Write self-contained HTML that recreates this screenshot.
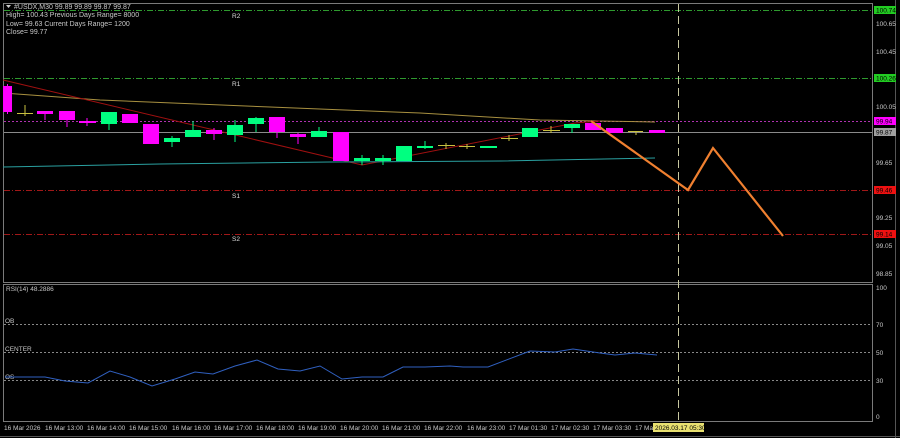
<!DOCTYPE html><html><head><style>
html,body{margin:0;padding:0;background:#000;width:900px;height:438px;overflow:hidden}
svg{display:block}
text{font-family:"Liberation Sans",sans-serif;font-size:6.5px;fill:#c8c8c8}
text.k{fill:#000}
text.w{fill:#ddd}
text.h{font-size:7px}
</style></head><body>
<svg width="900" height="438" viewBox="0 0 900 438">
<rect width="900" height="438" fill="#000"/>
<rect x="3.5" y="3.5" width="869" height="279" fill="none" stroke="#7a7a7a"/>
<rect x="3.5" y="284.5" width="869" height="137" fill="none" stroke="#7a7a7a"/>
<line x1="0" y1="436.5" x2="900" y2="436.5" stroke="#555"/>
<line x1="895.5" y1="0" x2="895.5" y2="438" stroke="#555"/>
<g stroke-width="1" fill="none">
<line x1="4" y1="10.5" x2="872" y2="10.5" stroke="#2e9a2e" stroke-dasharray="6,2,1,2"/>
<line x1="4" y1="78.5" x2="872" y2="78.5" stroke="#2e9a2e" stroke-dasharray="6,2,1,2"/>
<line x1="4" y1="121.5" x2="872" y2="121.5" stroke="#b030b0" stroke-dasharray="2,2"/>
<line x1="4" y1="132.5" x2="872" y2="132.5" stroke="#8a8a8a"/>
<line x1="4" y1="190.5" x2="872" y2="190.5" stroke="#a01818" stroke-dasharray="6,2,1,2"/>
<line x1="4" y1="234.5" x2="872" y2="234.5" stroke="#a01818" stroke-dasharray="6,2,1,2"/>
<line x1="678.5" y1="4" x2="678.5" y2="422" stroke="#c8c8a0" stroke-dasharray="8,4"/>
</g>
<text x="232" y="18" class="w">R2</text>
<text x="232" y="86" class="w">R1</text>
<text x="232" y="198" class="w">S1</text>
<text x="232" y="241" class="w">S2</text>
<polyline points="3,93 100,100 270,107 420,113 540,120 655,122" fill="none" stroke="#a89040" stroke-width="1"/>
<polyline points="3,80 362,165 575,123 600,121" fill="none" stroke="#a01010" stroke-width="1"/>
<polyline points="3,167 160,164 330,162 500,161 655,158" fill="none" stroke="#2aa0a0" stroke-width="1"/>
<g>
<line x1="7.5" y1="84" x2="7.5" y2="114" stroke="#ff00ff"/><rect x="3" y="86" width="9" height="26" fill="#ff00ff"/>
<line x1="25" y1="105" x2="25" y2="116" stroke="#c8c040"/><rect x="17" y="113" width="16" height="1" fill="#c8c040"/>
<line x1="45" y1="111" x2="45" y2="120" stroke="#ff00ff"/><rect x="37" y="111" width="16" height="3" fill="#ff00ff"/>
<line x1="67" y1="111" x2="67" y2="127" stroke="#ff00ff"/><rect x="59" y="111" width="16" height="9" fill="#ff00ff"/>
<line x1="87" y1="118" x2="87" y2="126" stroke="#ff00ff"/><rect x="79" y="121" width="17" height="2" fill="#ff00ff"/>
<line x1="109" y1="112" x2="109" y2="130" stroke="#00ff80"/><rect x="101" y="112" width="16" height="12" fill="#00ff80"/>
<rect x="122" y="114" width="16" height="9" fill="#ff00ff"/>
<line x1="151" y1="124" x2="151" y2="144" stroke="#ff00ff"/><rect x="143" y="124" width="16" height="20" fill="#ff00ff"/>
<line x1="172" y1="136" x2="172" y2="147" stroke="#00ff80"/><rect x="164" y="138" width="16" height="4" fill="#00ff80"/>
<line x1="193" y1="121" x2="193" y2="137" stroke="#00ff80"/><rect x="185" y="130" width="16" height="7" fill="#00ff80"/>
<line x1="214" y1="128" x2="214" y2="140" stroke="#ff00ff"/><rect x="206" y="130" width="16" height="4" fill="#ff00ff"/>
<line x1="235" y1="120" x2="235" y2="142" stroke="#00ff80"/><rect x="227" y="125" width="16" height="10" fill="#00ff80"/>
<line x1="256" y1="117" x2="256" y2="132" stroke="#00ff80"/><rect x="248" y="118" width="16" height="6" fill="#00ff80"/>
<line x1="277" y1="117" x2="277" y2="138" stroke="#ff00ff"/><rect x="269" y="117" width="16" height="15" fill="#ff00ff"/>
<line x1="298" y1="133" x2="298" y2="144" stroke="#ff00ff"/><rect x="290" y="134" width="16" height="3" fill="#ff00ff"/>
<line x1="319" y1="127" x2="319" y2="137" stroke="#00ff80"/><rect x="311" y="131" width="16" height="6" fill="#00ff80"/>
<rect x="333" y="132" width="16" height="29" fill="#ff00ff"/>
<line x1="362" y1="155" x2="362" y2="165" stroke="#00ff80"/><rect x="354" y="158" width="16" height="3" fill="#00ff80"/>
<line x1="383" y1="155" x2="383" y2="165" stroke="#00ff80"/><rect x="375" y="158" width="16" height="3" fill="#00ff80"/>
<rect x="396" y="146" width="16" height="15" fill="#00ff80"/>
<line x1="425" y1="141" x2="425" y2="149" stroke="#00ff80"/><rect x="417" y="146" width="16" height="2" fill="#00ff80"/>
<line x1="446" y1="143" x2="446" y2="149" stroke="#c8c040"/><rect x="438" y="145" width="17" height="1" fill="#c8c040"/>
<line x1="467" y1="144" x2="467" y2="149" stroke="#c8c040"/><rect x="459" y="146" width="16" height="1" fill="#c8c040"/>
<rect x="480" y="146" width="17" height="2" fill="#00ff80"/>
<line x1="509" y1="135" x2="509" y2="141" stroke="#c8c040"/><rect x="501" y="138" width="17" height="1" fill="#c8c040"/>
<rect x="522" y="128" width="16" height="9" fill="#00ff80"/>
<line x1="551" y1="126" x2="551" y2="133" stroke="#c8c040"/><rect x="543" y="130" width="17" height="1" fill="#c8c040"/>
<line x1="572" y1="124" x2="572" y2="133" stroke="#00ff80"/><rect x="564" y="124" width="16" height="4" fill="#00ff80"/>
<rect x="585" y="123" width="16" height="7" fill="#ff00ff"/>
<rect x="606" y="128" width="17" height="5" fill="#ff00ff"/>
<line x1="636" y1="131" x2="636" y2="135" stroke="#c8c040"/><rect x="628" y="131" width="15" height="1" fill="#c8c040"/>
<rect x="649" y="130" width="16" height="3" fill="#ff00ff"/>
</g>
<polyline points="591,121 688,190 713,148 783,236" fill="none" stroke="#f08030" stroke-width="2.2"/>
<polygon points="6,5 11,5 8.5,8" fill="#ccc"/>
<text x="14" y="9" class="h">#USDX,M30  99.89 99.89 99.87 99.87</text>
<text x="6" y="17" class="h">High= 100.43    Previous Days Range= 8000</text>
<text x="6" y="26" class="h">Low= 99.63    Current Days Range= 1200</text>
<text x="6" y="34" class="h">Close= 99.77</text>
<g>
<rect x="874" y="6" width="22" height="8" fill="#22cc22"/><text x="876" y="12.5" class="k">100.74</text>
<text x="876" y="26">100.65</text>
<text x="876" y="54">100.45</text>
<rect x="874" y="74" width="22" height="8" fill="#22cc22"/><text x="876" y="80.5" class="k">100.26</text>
<text x="876" y="109">100.05</text>
<rect x="874" y="117" width="22" height="8" fill="#ff00ff"/><text x="876" y="123.5" class="k">99.94</text>
<rect x="874" y="128" width="22" height="8" fill="#a0a0a0"/><text x="876" y="134.5" class="k">99.87</text>
<text x="876" y="165">99.65</text>
<rect x="874" y="186" width="22" height="8" fill="#ee1111"/><text x="876" y="192.5" class="k">99.46</text>
<text x="876" y="220">99.25</text>
<rect x="874" y="230" width="22" height="8" fill="#ee1111"/><text x="876" y="236.5" class="k">99.14</text>
<text x="876" y="248">99.05</text>
<text x="876" y="276">98.85</text>
</g>
<text x="6" y="291">RSI(14) 48.2886</text>
<g stroke="#888" stroke-dasharray="2,2">
<line x1="4" y1="324.5" x2="872" y2="324.5"/>
<line x1="4" y1="352.5" x2="872" y2="352.5"/>
<line x1="4" y1="380.5" x2="872" y2="380.5"/>
</g>
<text x="5" y="323">OB</text><text x="5" y="351">CENTER</text><text x="5" y="379">OS</text>
<text x="876" y="290">100</text><text x="876" y="327">70</text><text x="876" y="355">50</text><text x="876" y="383">30</text><text x="876" y="419">0</text>
<polyline points="5,377 45,377 65,381 88,383 110,371 130,377 152,386 175,379 195,372 213,374 235,366 257,360 278,369 300,371 320,366 342,379 362,377 383,377 403,367 425,367 450,366 463,367 488,367 530,351 555,352 573,349 600,353 615,355 635,353 657,355" fill="none" stroke="#3060c0" stroke-width="1"/>
<g>
<text x="4" y="430">16 Mar 2026</text>
<text x="45" y="430">16 Mar 13:00</text>
<text x="87" y="430">16 Mar 14:00</text>
<text x="129" y="430">16 Mar 15:00</text>
<text x="172" y="430">16 Mar 16:00</text>
<text x="214" y="430">16 Mar 17:00</text>
<text x="256" y="430">16 Mar 18:00</text>
<text x="298" y="430">16 Mar 19:00</text>
<text x="340" y="430">16 Mar 20:00</text>
<text x="382" y="430">16 Mar 21:00</text>
<text x="424" y="430">16 Mar 22:00</text>
<text x="467" y="430">16 Mar 23:00</text>
<text x="509" y="430">17 Mar 01:30</text>
<text x="551" y="430">17 Mar 02:30</text>
<text x="593" y="430">17 Mar 03:30</text>
<text x="635" y="430">17 Ma</text>
<rect x="653" y="423" width="51" height="9" fill="#e8e070"/>
<text x="655" y="430" class="k">2026.03.17 05:30</text>
</g>
</svg>
</body></html>
